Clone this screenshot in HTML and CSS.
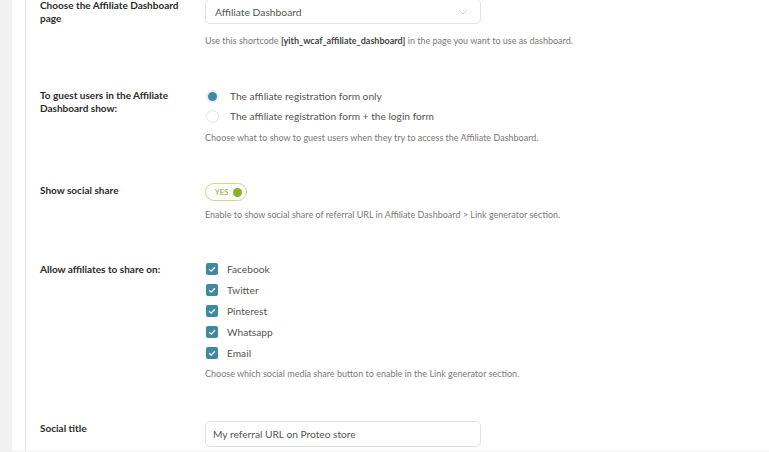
FILE: index.html
```html
<!DOCTYPE html>
<html>
<head>
<meta charset="utf-8">
<link rel="stylesheet" href="styles.css">
</head>
<body>
<div class="page">
  <div class="wrap">
    <div class="panel">
      <div class="row row-first">
        <div class="label">Choose the Affiliate Dashboard page</div>
        <div class="field">
          <div class="select">
            <span>Affiliate Dashboard</span>
            <svg class="chev" width="10" height="6" viewBox="0 0 10 6"><path d="M1 1 L5 5 L9 1" fill="none" stroke="#d0d0d0" stroke-width="1"/></svg>
          </div>
          <div class="desc desc-select">Use this shortcode <b>[yith_wcaf_affiliate_dashboard]</b> in the page you want to use as dashboard.</div>
        </div>
      </div>

      <div class="row row-radio">
        <div class="label label-radio">To guest users in the Affiliate Dashboard show:</div>
        <div class="field">
          <div class="radio-item"><span class="radio checked"></span><span>The affiliate registration form only</span></div>
          <div class="radio-item"><span class="radio"></span><span>The affiliate registration form + the login form</span></div>
          <div class="desc desc-radio">Choose what to show to guest users when they try to access the Affiliate Dashboard.</div>
        </div>
      </div>

      <div class="row row-toggle">
        <div class="label label-toggle">Show social share</div>
        <div class="field">
          <div class="toggle"><span class="yes">YES</span><span class="knob"></span></div>
          <div class="desc desc-toggle">Enable to show social share of referral URL in Affiliate Dashboard &gt; Link generator section.</div>
        </div>
      </div>

      <div class="row row-check">
        <div class="label label-check">Allow affiliates to share on:</div>
        <div class="field">
          <div class="check-item"><span class="check"><svg width="12" height="12" viewBox="0 0 12 12"><path d="M3.2 6.2 L5.2 8.1 L8.9 4.2" fill="none" stroke="#fff" stroke-width="1.3"/></svg></span><span>Facebook</span></div>
          <div class="check-item"><span class="check"><svg width="12" height="12" viewBox="0 0 12 12"><path d="M3.2 6.2 L5.2 8.1 L8.9 4.2" fill="none" stroke="#fff" stroke-width="1.3"/></svg></span><span>Twitter</span></div>
          <div class="check-item"><span class="check"><svg width="12" height="12" viewBox="0 0 12 12"><path d="M3.2 6.2 L5.2 8.1 L8.9 4.2" fill="none" stroke="#fff" stroke-width="1.3"/></svg></span><span>Pinterest</span></div>
          <div class="check-item"><span class="check"><svg width="12" height="12" viewBox="0 0 12 12"><path d="M3.2 6.2 L5.2 8.1 L8.9 4.2" fill="none" stroke="#fff" stroke-width="1.3"/></svg></span><span>Whatsapp</span></div>
          <div class="check-item"><span class="check"><svg width="12" height="12" viewBox="0 0 12 12"><path d="M3.2 6.2 L5.2 8.1 L8.9 4.2" fill="none" stroke="#fff" stroke-width="1.3"/></svg></span><span>Email</span></div>
          <div class="desc desc-check">Choose which social media share button to enable in the Link generator section.</div>
        </div>
      </div>

      <div class="row row-input">
        <div class="label label-input">Social title</div>
        <div class="field">
          <div class="input">My referral URL on Proteo store</div>
        </div>
      </div>
    </div>
  </div>
</div>
</body>
</html>
```

FILE: styles.css
```css
html, body {
  margin: 0;
  padding: 0;
  height: 100%;
  overflow: hidden;
}
body {
  background: #f1f1f1;
  font-family: Lato, "Open Sans", sans-serif;
  color: #333;
}
.page {
  padding-left: 12px;
  height: 100%;
}
.wrap {
  background: #fff;
  padding-left: 13px;
  height: 100%;
}
.panel {
  border-left: 1px solid #e3e3e3;
  padding-left: 14px;
  height: 100%;
}
.row {
  display: flex;
}
.label {
  width: 165px;
  flex: none;
  font-size: 10px;
  font-weight: bold;
  line-height: 13px;
  color: #2b2b2b;
  padding-right: 10px;
  box-sizing: border-box;
}
.field {
  flex: 1;
}
.row-first {
  margin-top: -1px;
}
.select {
  width: 276px;
  height: 25px;
  box-sizing: border-box;
  border: 1px solid #e2e2e2;
  border-radius: 5px;
  margin-top: 0;
  display: flex;
  align-items: center;
  justify-content: space-between;
  padding: 0 12px 0 9px;
  font-size: 10.3px;
  color: #555;
}
.desc {
  font-size: 9px;
  line-height: 14px;
  color: #7a7a7a;
}
.desc b {
  color: #444;
}
.desc-select { margin-top: 10px; }

.row-radio { margin-top: 38px; }
.label-radio { padding-top: 3px; }
.radio-item {
  display: flex;
  align-items: center;
  height: 20px;
  font-size: 10.2px;
  color: #555;
}
.radio {
  width: 13px;
  height: 13px;
  box-sizing: border-box;
  border: 1px solid #e4e4e4;
  border-radius: 50%;
  margin-left: 1px;
  margin-right: 11px;
  flex: none;
}
.radio.checked {
  background: #3e8aa5;
  border: 2px solid #e8eef0;
}
.desc-radio { margin-top: 5px; }

.row-toggle { margin-top: 38px; }
.label-toggle { padding-top: 1px; }
.toggle {
  width: 42px;
  height: 18px;
  box-sizing: border-box;
  border: 1px solid #c9db8c;
  border-radius: 9px;
  background: #fcfdf7;
  display: flex;
  align-items: center;
  padding: 0 4px 0 9px;
  justify-content: space-between;
}
.yes {
  font-size: 7.5px;
  color: #8aa93a;
  letter-spacing: 0.1px;
}
.knob {
  width: 9px;
  height: 9px;
  border-radius: 50%;
  background: #8cb02b;
}
.desc-toggle { margin-top: 7px; }

.row-check { margin-top: 37px; }
.label-check { padding-top: 4px; }
.check-item {
  display: flex;
  align-items: center;
  height: 20.8px;
  font-size: 10.2px;
  color: #555;
}
.check {
  width: 12px;
  height: 12px;
  border-radius: 2px;
  background: #3e8aa5;
  margin-left: 1px;
  margin-right: 9px;
  flex: none;
  display: flex;
}
.desc-check { margin-top: 4px; }

.row-input { margin-top: 40px; }
.label-input { padding-top: 1px; }
.input {
  width: 276px;
  height: 26px;
  box-sizing: border-box;
  border: 1px solid #e2e2e2;
  border-radius: 5px;
  display: flex;
  align-items: center;
  padding-left: 7px;
  font-size: 10.2px;
  color: #555;
}
```
